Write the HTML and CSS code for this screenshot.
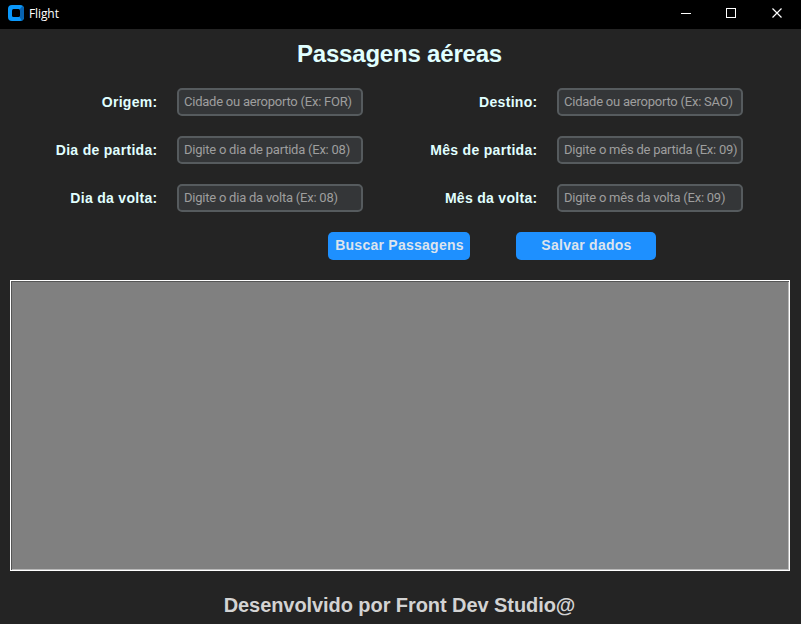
FILE: index.html
```html
<!DOCTYPE html>
<html lang="pt-BR">
<head>
<meta charset="utf-8">
<title>Flight</title>
<link rel="stylesheet" href="styles.css">
</head>
<body>
<header class="titlebar">
  <svg class="logo" width="16" height="16" viewBox="0 0 16 16">
    <rect width="16" height="16" rx="4" fill="#0a98fb"/>
    <path d="M12 4 14.500 1q1.500 1 1.500 3v8q0 3-2 3.700L11.500 12h.5z" fill="#0862b0"/>
    <rect x="4" y="4" width="8" height="8" rx="1.500" fill="#000"/>
  </svg>
  <span class="name">Flight</span>
  <svg class="controls" width="138" height="28" viewBox="0 0 138 28" fill="none" stroke="#fff">
    <path d="M18 13.500h10M63.500 8.500h9v9h-9z" shape-rendering="crispEdges"/>
    <path d="m109.500 8.500 9 9m0-9-9 9" stroke-width="1.200"/>
  </svg>
</header>
<main>
  <h1>Passagens aéreas</h1>
  <form class="fields">
    <label for="a">Origem:</label><input id="a" placeholder="Cidade ou aeroporto (Ex: FOR)">
    <label for="b">Destino:</label><input id="b" placeholder="Cidade ou aeroporto (Ex: SAO)">
    <label for="c">Dia de partida:</label><input id="c" placeholder="Digite o dia de partida (Ex: 08)">
    <label for="d">Mês de partida:</label><input id="d" placeholder="Digite o mês de partida (Ex: 09)">
    <label for="e">Dia da volta:</label><input id="e" placeholder="Digite o dia da volta (Ex: 08)">
    <label for="f">Mês da volta:</label><input id="f" placeholder="Digite o mês da volta (Ex: 09)">
  </form>
  <div class="actions">
    <button class="search">Buscar Passagens</button>
    <button class="save">Salvar dados</button>
  </div>
  <section class="results"></section>
</main>
<footer>Desenvolvido por Front Dev Studio@</footer>
</body>
</html>
```

FILE: styles.css
```css
* { box-sizing: border-box; }
body {
  margin: 0;
  height: 624px;
  overflow: hidden;
  background: #242424;
  font-family: "Liberation Sans", Arial, sans-serif;
}
.titlebar {
  display: flex;
  align-items: center;
  height: 29px;
  padding: 0 0 2px 8px;
  background: #000;
  color: #fff;
}
.logo { margin-top: -1px; }
.name {
  margin-left: 5px;
  font: 12px/16px "Open Sans", "Noto Sans", sans-serif;
  letter-spacing: -0.1px;
}
.controls { margin-left: auto; align-self: flex-start; }
h1 {
  margin: 0;
  height: 59px;
  padding: 11px 2px 0 0;
  font-size: 24px;
  line-height: 28px;
  letter-spacing: -0.2px;
  text-align: center;
  color: #e0ffff;
}
.fields {
  display: grid;
  grid-template-columns: 158px 187px 155px 186px;
  gap: 20px 19px;
  grid-auto-rows: 28px;
}
label {
  padding-right: 0.5px;
  font-size: 14px;
  font-weight: bold;
  line-height: 28px;
  letter-spacing: 0.3px;
  text-align: right;
  color: #e0ffff;
}
input {
  width: 186px;
  height: 28px;
  padding: 0 3px 2px 5px;
  border: 2px solid #565b5e;
  border-radius: 5px;
  background: #343638;
  color: #dce4ee;
  font: 13px Roboto, sans-serif;
  letter-spacing: -0.23px;
}
input::placeholder { color: #9e9e9e; opacity: 1; }
.actions {
  display: flex;
  gap: 46px;
  margin: 20px 0 0 328px;
}
button {
  height: 28px;
  padding: 0 0 2px 1px;
  border: 0;
  border-radius: 5px;
  background: #1e90ff;
  color: #dce4ee;
  font: bold 14px "Liberation Sans", Arial, sans-serif;
  letter-spacing: 0.26px;
}
.search { width: 142px; }
.save { width: 140px; }
.results {
  width: 780px;
  height: 291px;
  margin: 20px 0 0 10px;
  border: 1px solid #fff;
  background: #808080;
  box-shadow: inset 1px 1px #555, inset -1px -1px #b8b8b8;
}
footer {
  margin-top: 22px;
  padding-right: 2px;
  font-size: 20px;
  font-weight: bold;
  line-height: 24px;
  letter-spacing: -0.07px;
  text-align: center;
  color: #d3d3d3;
}
```
